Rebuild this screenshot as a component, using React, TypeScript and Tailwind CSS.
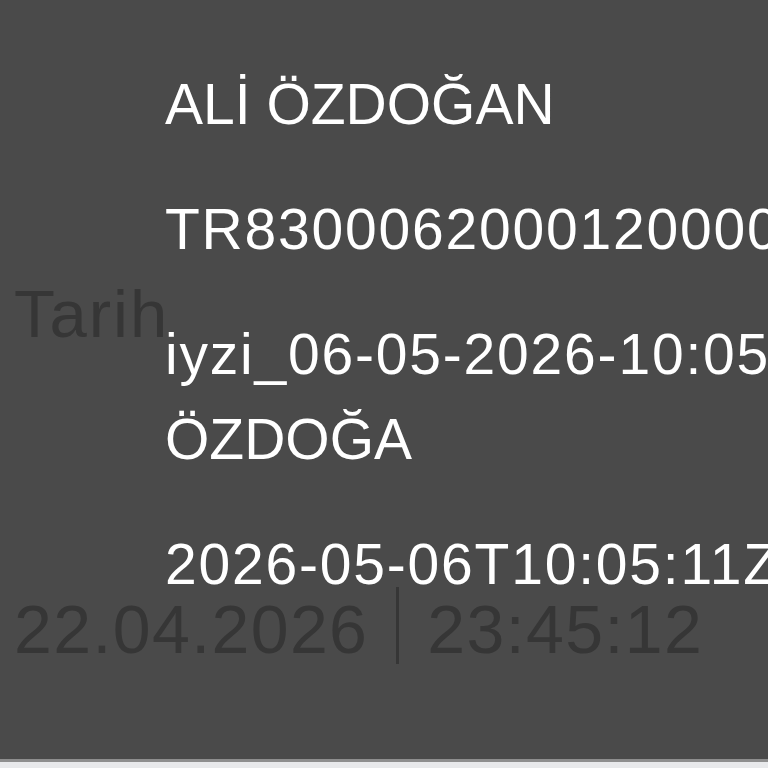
const lines = [
  [{ t: 'ALİ ÖZDOĞAN', num: false }],
  [{ t: 'TR830006200012000000000000000', num: true }],
  [
    { t: 'iyzi_06-05-2026-10:05:11_ALİ', num: true },
    { t: 'ÖZDOĞA', num: false },
  ],
  [{ t: '2026-05-06T10:05:11Z', num: true }],
]

export default function App() {
  return (
    <div className="relative h-[768px] w-[768px] overflow-hidden bg-[#4a4a4a] font-['Liberation_Sans',Arial,sans-serif]">
      {/* page underneath the dim layer */}
      <div className="flex h-[759px] flex-col px-[14px] pt-[280px] text-[#363636]">
        <div className="text-[67px] leading-[67px] tracking-[2px]">Tarih</div>
        <div className="mt-[246px] flex items-center text-[68px] leading-[68px] tracking-[1.4px]">
          <span>22.04.2026</span>
          <span className="mx-[28px] mt-[-6px] h-[77px] w-[3px] bg-[#363636]" />
          <span>23:45:12</span>
        </div>
      </div>
      <div className="h-[3px] bg-[#8e8e8e]" />
      <div className="h-[6px] bg-[#e8e9eb]" />

      {/* popup text on top */}
      <div className="absolute inset-0 flex flex-col gap-[40px] pl-[165px] pt-[62px] text-[57px] leading-[85px] text-white">
        {lines.map((item, i) => (
          <div key={i}>
            {item.map((l) => (
              <div key={l.t} className={l.num ? 'whitespace-nowrap tracking-[1.8px]' : 'whitespace-nowrap'}>
                {l.t}
              </div>
            ))}
          </div>
        ))}
      </div>
    </div>
  )
}
